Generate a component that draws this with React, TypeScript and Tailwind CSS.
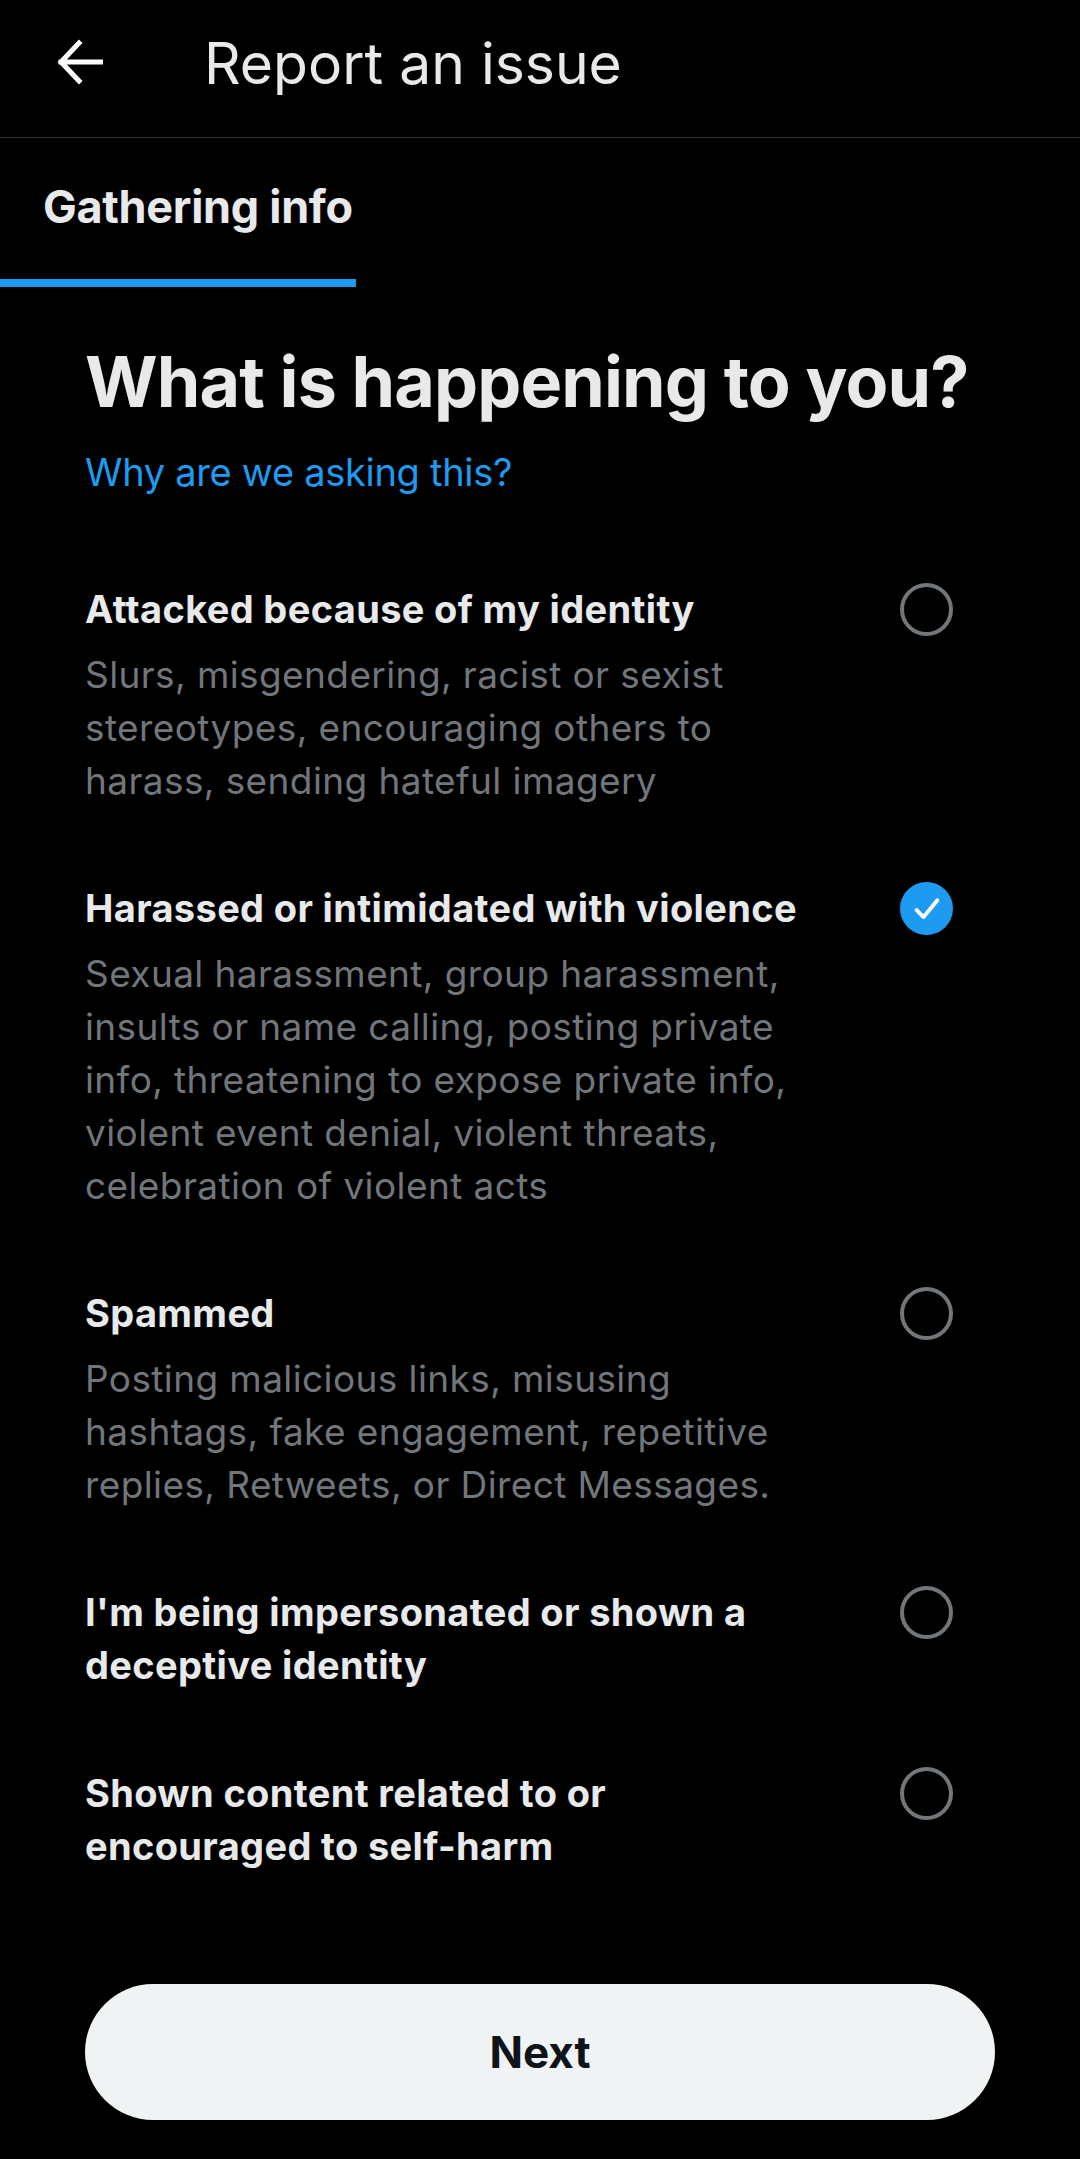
import React from "react";

type Opt = { title: string; desc?: string; checked?: boolean };

const options: Opt[] = [
  {
    title: "Attacked because of my identity",
    desc: "Slurs, misgendering, racist or sexist stereotypes, encouraging others to harass, sending hateful imagery",
  },
  {
    title: "Harassed or intimidated with violence",
    desc: "Sexual harassment, group harassment, insults or name calling, posting private info, threatening to expose private info, violent event denial, violent threats, celebration of violent acts",
    checked: true,
  },
  {
    title: "Spammed",
    desc: "Posting malicious links, misusing hashtags, fake engagement, repetitive replies, Retweets, or Direct Messages.",
  },
  { title: "I'm being impersonated or shown a deceptive identity" },
  { title: "Shown content related to or encouraged to self-harm" },
];

function Radio({ checked }: { checked?: boolean }) {
  if (checked) {
    return (
      <div className="w-[53px] h-[53px] rounded-full bg-[#1d9bf0] flex items-center justify-center shrink-0">
        <svg width="46" height="46" viewBox="0 0 24 24" fill="none">
          <path d="M6.6 12.6l3.6 3.6L17.4 7.4" stroke="#ffffff" strokeWidth="2" strokeLinecap="round" strokeLinejoin="round" />
        </svg>
      </div>
    );
  }
  return <div className="w-[53px] h-[53px] rounded-full border-[4px] border-[#71767b] shrink-0" />;
}

export default function App() {
  return (
    <div
      className="w-[1080px] min-h-[2159px] bg-black text-[#e7e9ea] flex flex-col"
      style={{ fontFamily: "Inter, 'Noto Sans', sans-serif" }}
    >
      {/* Header */}
      <div className="h-[138px] border-b border-[#2f3336] flex items-center pb-[14px]">
        <div className="w-[204px] flex pl-[57px]">
          <svg width="46" height="46" viewBox="0 0 46 46" fill="none">
            <path d="M4 23h40M22 4L4 23l18 19" stroke="#ffffff" strokeWidth="5" strokeLinecap="square" strokeLinejoin="miter" />
          </svg>
        </div>
        <div className="text-[57px] leading-none font-normal text-[#e7e9ea] mt-[4px]">Report an issue</div>
      </div>

      {/* Tab */}
      <div className="flex">
        <div className="flex flex-col">
          <div className="h-[141px] px-[43px] flex items-center text-[45px] font-bold leading-none tracking-[-0.3px] pb-[4px]">
            Gathering info
          </div>
          <div className="h-[8px] bg-[#1d9bf0] w-[356px]" />
        </div>
      </div>

      {/* Content */}
      <div className="px-[85px] flex flex-col flex-1">
        <h1 className="mt-[52px] text-[70px] leading-[85px] font-bold tracking-[-0.9px] text-[#e7e9ea]">
          What is happening to you?
        </h1>
        <div className="mt-[24px] text-[38px] leading-[48px] tracking-[-0.3px] text-[#1d9bf0]">
          Why are we asking this?
        </div>

        <div className="mt-[87px] flex flex-col gap-[75px]">
          {options.map((o, i) => (
            <div key={i} className="flex justify-between pr-[42px]">
              <div className="w-[725px] flex flex-col">
                <div className="text-[38px] leading-[53px] font-bold tracking-[0.35px] text-[#e7e9ea]">{o.title}</div>
                {o.desc && (
                  <div className="mt-[12px] text-[37px] leading-[53px] tracking-[0.4px] text-[#71767b]">{o.desc}</div>
                )}
              </div>
              <div className="h-[53px] flex items-center">
                <Radio checked={o.checked} />
              </div>
            </div>
          ))}
        </div>

        <div className="mt-[111px] mb-[38px] h-[136px] rounded-full bg-[#eff3f4] flex items-center justify-center">
          <span className="text-[44px] font-bold text-[#0f1419] leading-none">Next</span>
        </div>
      </div>
    </div>
  );
}
